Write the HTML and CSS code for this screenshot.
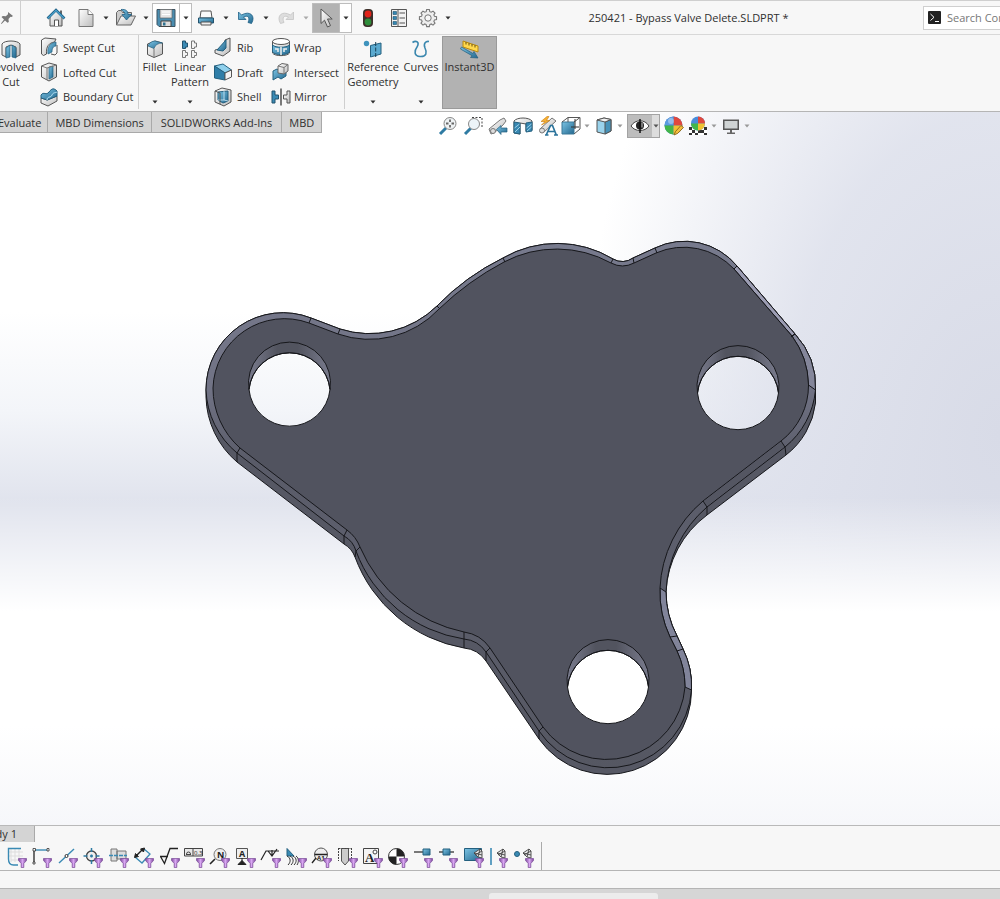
FILE: index.html
```
<!DOCTYPE html>
<html lang="en">

<head>
  <meta charset="UTF-8">
  <meta name="viewport" content="width=device-width, initial-scale=1.0">
  <title>250421 - Bypass Valve Delete.SLDPRT</title>
  <link rel="stylesheet" href="styles.css">
</head>

<body>
  <!-- shared gradients and symbols -->
  <svg class="defs" width="0" height="0" aria-hidden="true">
    <defs>
      <linearGradient id="blue" x1="0" y1="0" x2="1" y2="1">
        <stop offset="0" stop-color="#7cc4e4" />
        <stop offset="1" stop-color="#23688f" />
      </linearGradient>
      <linearGradient id="grey" x1="0" y1="0" x2="1" y2="1">
        <stop offset="0" stop-color="#ffffff" />
        <stop offset="1" stop-color="#bdbdbd" />
      </linearGradient>
      <linearGradient id="purple" x1="0" y1="0" x2="1" y2="0">
        <stop offset="0" stop-color="#7d4a9c" />
        <stop offset=".5" stop-color="#d9a6f2" />
        <stop offset="1" stop-color="#7d4a9c" />
      </linearGradient>
      <symbol id="funnel" viewBox="0 0 9 10">
        <path d="M.5.5h8v2L5.8 5.5v4H3.2v-4L.5 2.5z" fill="url(#purple)" stroke="#7a4a98" stroke-width=".7" />
      </symbol>
      <symbol id="caret" viewBox="0 0 6 4">
        <path d="M.5.5h5L3 3.5z" fill="currentColor" />
      </symbol>
      <symbol id="fan" viewBox="0 0 10 12">
        <path d="M1 5 7 1l2 2v7l-4-1zM1 5l8 2M7 1 5 9M9 3 2 7" fill="#e8e8e8" stroke="#444" stroke-width=".9" />
      </symbol>
    </defs>
  </svg>

  <header class="titlebar">
    <button class="pin" aria-label="Pin">
      <svg width="14" height="14" viewBox="0 0 14 14"><path d="M8 1l5 4-1.500 1-1-.3-2 2.300.3 3-1.300.8L5 9.500 1.500 13 1 12.500 4 8.500 1.500 6l1.300-1 3 .2L8 3.200z" fill="#777" /></svg>
    </button>
    <nav class="quick">
      <button class="wide" aria-label="Home">
        <svg width="20" height="20" viewBox="0 0 20 20"><path d="M4 9v9h12V9l-6-6z" fill="url(#grey)" stroke="#555" /><path d="M8.500 18v-6h4v6" fill="#fff" stroke="#555" /><path d="M14 2.500h2V6h-2z" fill="#666" /><path d="M1.500 10.500 10 2l8.500 8.500" fill="none" stroke="#1f5f85" stroke-width="2.600" /><path d="M2 10.200 10 2.400l8 7.800" fill="none" stroke="#4ba3cd" stroke-width="1.200" /></svg>
      </button>
      <div class="split">
        <button aria-label="New"><svg width="18" height="20" viewBox="0 0 18 20"><path d="M2 1.500h9l5 5v12H2z" fill="url(#grey)" stroke="#777" /><path d="M11 1.500v5h5" fill="#fff" stroke="#777" /></svg></button>
        <button class="drop" aria-label="New options"><svg><use href="#caret" /></svg></button>
      </div>
      <div class="split">
        <button aria-label="Open"><svg width="22" height="20" viewBox="0 0 22 20"><path d="M1.500 17V4.500l2-2h3l1 2h9V8" fill="#ccc" stroke="#666" /><path d="M1.500 17 6 8h14.500L16 17z" fill="url(#grey)" stroke="#666" /><path d="M6 1.500c5-.5 7 1.500 7 5h3.500L11.500 12 7 6.500h3c0-2-1.500-3.500-4-5z" fill="url(#blue)" stroke="#1f5f85" stroke-width=".8" /></svg></button>
        <button class="drop" aria-label="Open options"><svg><use href="#caret" /></svg></button>
      </div>
      <div class="split boxed">
        <button aria-label="Save"><svg width="20" height="20" viewBox="0 0 20 20"><path d="M1 1.500h18v17H3l-2-2z" fill="#4a8db0" stroke="#3d5361" /><path d="M4 1.500h12v8.500H4z" fill="#e5e5e5" stroke="#666" stroke-width=".7" /><path d="M5 13h10v5.500H5z" fill="#ddd" stroke="#444" /><path d="M7 14.500h2.500v3H7z" fill="#2e718f" /><path d="M6 4h8M6 6.500h8" stroke="#fff" /></svg></button>
        <button class="drop" aria-label="Save options"><svg><use href="#caret" /></svg></button>
      </div>
      <div class="split">
        <button aria-label="Print"><svg width="18" height="18" viewBox="0 0 18 18"><path d="M4 2h10l1 7H3z" fill="#fafafa" stroke="#555" /><path d="M1.500 9h15v5h-15z" fill="url(#blue)" stroke="#23526c" /><path d="M4 13h10v3H4z" fill="#eee" stroke="#555" /></svg></button>
        <button class="drop" aria-label="Print options"><svg><use href="#caret" /></svg></button>
      </div>
      <div class="split">
        <button aria-label="Undo"><svg width="18" height="18" viewBox="0 0 18 18"><path d="M1.500 3v7.500H9L6.500 8c4-2 7 0 4.500 5.500l3.500 1C19 7 13 1 4.500 6z" fill="url(#blue)" stroke="#1f5f85" stroke-width=".8" /></svg></button>
        <button class="drop" aria-label="Undo options"><svg><use href="#caret" /></svg></button>
      </div>
      <div class="split off">
        <button aria-label="Redo" disabled><svg width="18" height="18" viewBox="0 0 18 18"><path d="M16.500 3v7.500H9L11.500 8c-4-2-7 0-4.500 5.500l-3.500 1C-1 7 5 1 13.500 6z" fill="#ddd" stroke="#c4c4c4" stroke-width=".8" /></svg></button>
        <button class="drop" aria-label="Redo options"><svg><use href="#caret" /></svg></button>
      </div>
      <div class="split boxed pressed">
        <button aria-label="Select"><svg width="16" height="22" viewBox="0 0 16 22"><path d="M3 2v14.500l3.500-3.300 3 6.800 3-1.400-3-6.600h4.700z" fill="url(#grey)" stroke="#555" /></svg></button>
        <button class="drop" aria-label="Select options"><svg><use href="#caret" /></svg></button>
      </div>
      <button class="wide" aria-label="Rebuild">
        <svg width="12" height="20" viewBox="0 0 12 20"><rect x="1" y="1" width="10" height="18" rx="4" fill="#3d2f2a" /><circle cx="6" cy="6" r="3.400" fill="#e2231a" /><circle cx="6" cy="14" r="3.400" fill="#2f8d3b" /></svg>
      </button>
      <button class="list" aria-label="File properties">
        <svg width="18" height="20" viewBox="0 0 18 20"><path d="M1.500 1.500h15v17h-15zM8 1.500v17" fill="#f2f2f2" stroke="#555" /><path d="M3 3.500h3.500v3H3zM3 8.500h3.500v3H3zM3 13.500h3.500v3H3z" fill="#3487b3" stroke="#24526b" stroke-width=".6" /><path d="M9.500 5H15M9.500 10H15M9.500 15H15" stroke="#555" /></svg>
      </button>
      <div class="split">
        <button aria-label="Options"><svg width="20" height="20" viewBox="0 0 20 20"><path d="M8.500 1.500h3l.5 2.300 1.600.7 2-1.300 2.200 2.200-1.300 2 .7 1.600 2.300.5v3l-2.300.5-.7 1.600 1.300 2-2.200 2.200-2-1.300-1.600.7-.5 2.300h-3L8 18.200l-1.600-.7-2 1.300-2.200-2.200 1.300-2-.7-1.600L.5 12.500v-3L2.800 9l.7-1.600-1.300-2 2.200-2.200 2 1.300L8 3.800z" transform="translate(1 .2) scale(.9)" fill="#eee" stroke="#777" stroke-width="1.200" /><circle cx="10" cy="10" r="3.200" fill="#f7f7f7" stroke="#777" /></svg></button>
        <button class="drop" aria-label="More options"><svg><use href="#caret" /></svg></button>
      </div>
    </nav>
    <div class="doc-title">250421 - Bypass Valve Delete.SLDPRT *</div>
    <label class="search">
      <svg width="13" height="13" viewBox="0 0 13 13" aria-hidden="true"><rect width="13" height="13" rx="1" fill="#222" /><path d="M2.500 3 6 6.300 2.500 9.500M7 10.500h4" fill="none" stroke="#fff" /></svg>
      <input type="text" placeholder="Search Commands" aria-label="Search Commands">
    </label>
  </header>

  <section class="ribbon">
    <div class="group first">
      <button class="big">
        <svg width="20" height="20" viewBox="0 0 20 20"><path d="M1 5c2-4 16-4 18 0v11l-4 2V8L10 6 5 8v10l-4-2z" fill="url(#grey)" stroke="#555" /><path d="M5 9l4-3v12l-4 1zM11 6l4 3v10l-4-1z" fill="url(#blue)" stroke="#24607f" stroke-width=".7" /></svg>
        <span>Revolved<br>Cut</span>
      </button>
      <div class="stack">
        <button><svg width="18" height="20" viewBox="0 0 18 20"><path d="M1.500 3 5 1l11 1-1.500 3C9 6 6 9 6.500 17l-3 1.500-2-1.500z" fill="url(#grey)" stroke="#555" /><path d="M8 17C7 10 10 6 16 5v4c-3 0-4 3-4 6z" fill="url(#blue)" stroke="#24607f" stroke-width=".7" /><path d="M11 17l4 1 2-2V8" fill="none" stroke="#555" /></svg>Swept Cut</button>
        <button><svg width="18" height="20" viewBox="0 0 18 20"><path d="M1.500 4 9 1l7.500 2v12L9 19l-7.500-4z" fill="url(#grey)" stroke="#555" /><path d="M1.500 4 7 6v12" fill="none" stroke="#777" /><path d="M9 5l4-1v11l-4 2z" fill="url(#blue)" stroke="#24607f" stroke-width=".7" /><path d="M7 6l9.500-3" stroke="#777" /></svg>Lofted Cut</button>
        <button><svg width="18" height="20" viewBox="0 0 18 20"><path d="M1 11l6 2 10-4v5l-9 5-7-3z" fill="url(#grey)" stroke="#555" /><path d="M1 11V8c3-4 5 1 8-3s5-4 8-1v5L7.500 13z" fill="url(#blue)" stroke="#24607f" /><path d="M7 13c0-4 4-2 5-5s4-2 5-3" fill="none" stroke="#b8e3f5" /></svg>Boundary Cut</button>
      </div>
    </div>

    <div class="group">
      <button class="big fillet">
        <svg width="18" height="20" viewBox="0 0 18 20"><path d="M1.500 5 9 2l7.500 2v11L8 18.500l-6.500-3z" fill="url(#grey)" stroke="#555" /><path d="M2 7c1-3 4-5 7-5l7.500 2C12 4 9 6 8 9.500z" fill="url(#blue)" stroke="#24607f" stroke-width=".7" /><path d="M8 9.500v9" stroke="#777" /></svg>
        <span>Fillet</span>
        <svg class="caret"><use href="#caret" /></svg>
      </button>
      <button class="big pattern">
        <svg width="18" height="20" viewBox="0 0 18 20"><path d="M1.500 2h3v2h2v4h-2v1.500h-3z" fill="#3a8ab4" stroke="#23536d" /><path d="M10.500 2h3v2h2v4h-2v1.500h-3zM1.500 11.500h3v2h2v3h-2v2h-3zM10.500 11.500h3v2h2v3h-2v2h-3z" fill="#f4f4f4" stroke="#777" /></svg>
        <span>Linear<br>Pattern</span>
        <svg class="caret"><use href="#caret" /></svg>
      </button>
      <div class="stack">
        <button><svg width="18" height="20" viewBox="0 0 18 20"><path d="M1 13l9-2 1-8 5-2v13l-7 5-8-3z" fill="url(#grey)" stroke="#555" /><path d="M3 13l9-10v8l-3 3z" fill="url(#blue)" stroke="#24607f" /></svg>Rib</button>
        <button><svg width="18" height="20" viewBox="0 0 18 20"><path d="M.5 4 9 2l8.500 6L11 11z" fill="#8fd0ec" stroke="#24607f" /><path d="M.5 4 11 11v7L.5 16z" fill="#2f7ea8" stroke="#24607f" /><path d="M11 11l6.500-3v7L11 18z" fill="#f4f4f4" stroke="#555" /></svg>Draft</button>
        <button><svg width="18" height="20" viewBox="0 0 18 20"><path d="M1 4 8 1l9 2v12l-7 4-9-4z" fill="url(#grey)" stroke="#555" /><path d="M4 5l10-1v10l-5 2-5-3z" fill="url(#blue)" stroke="#24607f" /><path d="M10 4v9l4 1M4 13l6 0" fill="none" stroke="#d4effa" stroke-width=".8" /><path d="M1 4l5 2v11" fill="none" stroke="#555" /></svg>Shell</button>
      </div>
      <div class="stack wrap">
        <button><svg width="20" height="20" viewBox="0 0 20 20"><path d="M1.500 4v12c2 3.500 15 3.500 17 0V4" fill="url(#grey)" stroke="#555" /><path d="M1.500 8c3 3 14 3 17 0v7c-3 3.500-14 3.500-17 0z" fill="url(#blue)" stroke="#24607f" /><ellipse cx="10" cy="4.500" rx="8.500" ry="3" fill="#fff" stroke="#555" /><path d="M4 12h3v3M16 12h-3v3M10 10v8" fill="none" stroke="#eee" stroke-width="1.500" /></svg>Wrap</button>
        <button><svg width="20" height="20" viewBox="0 0 20 20"><path d="M2 9l4-2 3 2 6-1v6l-5 3-3-2-5 3z" fill="url(#blue)" stroke="#24607f" /><path d="M7 4l4-2.500 6 1V9l-4 3-6-1z" fill="url(#grey)" stroke="#666" /><path d="M7 4l6 1.500V12M13 5.500l4-3" fill="none" stroke="#777" /></svg>Intersect</button>
        <button><svg width="20" height="20" viewBox="0 0 20 20"><path d="M1 4h3v4h3.500v4H4v4H1z" fill="#3a8ab4" stroke="#23536d" /><path d="M19 4h-3v4h-3.500v4H16v4h3z" fill="url(#grey)" stroke="#555" /><path d="M10 1.500v17" stroke="#444" stroke-width="1.400" /></svg>Mirror</button>
      </div>
    </div>

    <div class="group last">
      <button class="big reference">
        <svg width="20" height="20" viewBox="0 0 20 20"><circle cx="3.500" cy="4.500" r="2.700" fill="#3f93bd" /><path d="M7.500 6.500 18 4v11L7.500 18z" fill="#5aa9cf" stroke="#24607f" /><path d="M12.700 3v16" stroke="#173f55" stroke-dasharray="4 1.500" /></svg>
        <span>Reference<br>Geometry</span>
        <svg class="caret"><use href="#caret" /></svg>
      </button>
      <button class="big curves">
        <svg width="20" height="20" viewBox="0 0 20 20"><path d="M1.500 3.500C5 1 9 3 6 8c-3 4-3 9 3 9.500 7 .5 7-4.500 5-8.500-2-5 1-7 4-6.500" fill="none" stroke="#3a87ae" stroke-width="1.600" /></svg>
        <span>Curves</span>
        <svg class="caret"><use href="#caret" /></svg>
      </button>
      <button class="big instant" aria-pressed="true">
        <svg width="20" height="20" viewBox="0 0 20 20"><path d="M3 2l15 5v6L3 8z" fill="#ffd84d" stroke="#b98a12" /><path d="M6 3v2.500M9 4v2.500M12 5v2.500M15 6v2.500" stroke="#6d5312" /><path d="M1.500 8 13 14.500l1-2L18 19l-7.500-.5 1.500-1.800L.5 10z" fill="url(#blue)" stroke="#24607f" stroke-width=".7" /></svg>
        <span>Instant3D</span>
      </button>
    </div>
  </section>

  <main class="viewport">
    <svg class="model" viewBox="0 112 1000 713" role="img" aria-label="Bypass valve plate">
      <defs>
        <linearGradient id="bevel" gradientUnits="userSpaceOnUse" x1="0" y1="240" x2="0" y2="770">
          <stop offset="0" stop-color="#777a8d" />
          <stop offset=".28" stop-color="#717385" />
          <stop offset=".42" stop-color="#595b68" />
          <stop offset=".6" stop-color="#5d5f6d" />
          <stop offset="1" stop-color="#555762" />
        </linearGradient>
        <linearGradient id="wall" x1="0" y1="0" x2="1" y2="0">
          <stop offset="0" stop-color="#7a7c8e" />
          <stop offset=".35" stop-color="#52545f" />
          <stop offset=".6" stop-color="#52545f" />
          <stop offset="1" stop-color="#7a7c8e" />
        </linearGradient>
        <path id="hole-left" d="M249 389.500a40.700 40.700 0 0 1 81 0a40.700 40.700 0 0 1-81 0z" />
        <path id="hole-right" d="M697.500 393a40.700 40.700 0 0 1 81 0a40.700 40.700 0 0 1-81 0z" />
        <path id="hole-bottom" d="M567.500 687a40.700 40.700 0 0 1 81 0a40.700 40.700 0 0 1-81 0z" />
        <mask id="holes">
          <rect y="112" width="1000" height="713" fill="#fff" />
          <use href="#hole-left" />
          <use href="#hole-right" />
          <use href="#hole-bottom" />
        </mask>
      </defs>
      <g mask="url(#holes)" stroke="#16171b" stroke-linejoin="round">
        <!-- side of the plate -->
        <path fill="#565864" d="M206 390A77 77 0 0 1 311 318L340 329A96 96 0 0 0 437 306A240 240 0 0 1 503 258A108 108 0 0 1 613 259A18 18 0 0 0 633 258L655 248A68 68 0 0 1 737 266L795 334A78 78 0 0 1 815.500 390V403A77 77 0 0 1 786 455L707 515A102 102 0 0 0 666 592A95 95 0 0 0 677 636L683 649A84 84 0 0 1 691.500 690A84 84 0 0 1 539 739L486 661A30 30 0 0 0 464 648A142 142 0 0 1 355 557A25 25 0 0 0 344 544L237 462A88 88 0 0 1 206 397z" />
        <!-- bevel -->
        <path fill="url(#bevel)" d="M206 390A77 77 0 0 1 311 318L340 329A96 96 0 0 0 437 306A240 240 0 0 1 503 258A108 108 0 0 1 613 259A18 18 0 0 0 633 258L655 248A68 68 0 0 1 737 266L795 334A78 78 0 0 1 815.500 390A83 83 0 0 1 785 447L707 507A118 118 0 0 0 666 592A95 95 0 0 0 677 636L683 649A84 84 0 0 1 691.500 690A83.500 83.500 0 0 1 539 731L486 652A30 30 0 0 0 464 639A137 137 0 0 1 356 551A25 25 0 0 0 344 536L237 453A86 86 0 0 1 206 390z" />
        <path fill="#9c9db3" d="M737 266L795 334 792 336 734 269z" />
        <path fill="#84869a" d="M795 334A78 78 0 0 1 815.500 390L808.500 385A86 86 0 0 0 792 336z" />
        <path fill="#81849a" d="M666 592A95 95 0 0 0 677 636L683 649A84 84 0 0 1 691.500 690L685 687A84 84 0 0 0 677 651L670 637A105 105 0 0 1 660 588z" />
        <!-- top face -->
        <path fill="#51535f" d="M213 388A71.500 71.500 0 0 1 309 323L338 334A95 95 0 0 0 439 309A287 287 0 0 1 504 262A113 113 0 0 1 611 263A25 25 0 0 0 634 263L656 253A69 69 0 0 1 734 269L792 336A86 86 0 0 1 808.500 385A70 70 0 0 1 781 441L703 501A121 121 0 0 0 660 588A105 105 0 0 0 670 637L677 651A84 84 0 0 1 685 687A78.600 78.600 0 0 1 543 727L490 648A38 38 0 0 0 464 632A145 145 0 0 1 360 547A38 38 0 0 0 347 530L240 448A80 80 0 0 1 213 388z" />
        <path stroke="none" fill="#545662" d="M784.500 446.500L707 506 703.500 501.500 781 442z" />
        <!-- facet seams -->
        <path fill="none" d="M311 318l-2 5M340 329l-2 5M437 306l3 3M503 258l2 4M613 259l-2 4M633 258l1 5M655 248l2 5M737 266l-3 3M795 334l-4 3M781 441l4 6 1 8M703 501l4 6v8M670 637l7-1M677 651l6-2M543 727l-4 4v8M490 648l-4 4v9M464 632v16M360 547l-4 4-1 6M347 530l-3 6v8M240 448l-3 5v9" />
      </g>
      <g fill="url(#wall)" stroke="#16171b">
        <path d="M249 389.500a41 41 0 1 1 81 0a40.700 40.700 0 0 0-81 0z" />
        <path d="M697.500 393a41 41 0 1 1 81 0a40.700 40.700 0 0 0-81 0z" />
        <path d="M567.500 687a41 41 0 1 1 81 0a40.700 40.700 0 0 0-81 0z" />
        <g fill="none">
          <use href="#hole-left" />
          <use href="#hole-right" />
          <use href="#hole-bottom" />
        </g>
      </g>
    </svg>

    <div class="overlay">
      <nav class="tabs">
        <button>Evaluate</button>
        <button>MBD Dimensions</button>
        <button class="addins">SOLIDWORKS Add-Ins</button>
        <button>MBD</button>
      </nav>
      <div class="headsup">
        <div class="view-tools">
          <button aria-label="Zoom to fit"><svg width="20" height="20" viewBox="0 0 20 20"><path d="M2 18l6-6" stroke="#2f7ba3" stroke-width="3" /><circle cx="12" cy="7.500" r="6" fill="#eef2f4" stroke="#888" /><path d="M12 3.500v8M8 7.500h8" stroke="#666" stroke-width="1.800" stroke-dasharray="2.500 3" /></svg></button>
          <button aria-label="Zoom to area"><svg width="20" height="20" viewBox="0 0 20 20"><path d="M9 1.500h10v11" fill="none" stroke="#444" stroke-dasharray="2 1.500" /><path d="M2 18l6-6" stroke="#2f7ba3" stroke-width="3" /><circle cx="11" cy="8" r="5.500" fill="#edf4f8" stroke="#888" /></svg></button>
          <button aria-label="Previous view"><svg width="20" height="20" viewBox="0 0 20 20"><path d="M1 13 12 4l4-2 2 3-3 4-9 8-3 1z" fill="url(#grey)" stroke="#777" /><circle cx="5" cy="15" r="2.500" fill="#ddd" stroke="#777" /><path d="M8.500 13.500 13 9.500V12h6v4h-6v2.500z" fill="url(#blue)" stroke="#24607f" stroke-width=".7" /></svg></button>
          <button aria-label="Section view"><svg width="20" height="20" viewBox="0 0 20 20"><path d="M1 5c3-4 15-4 18 0v9l-6 1V8l-6-1v11l-6-1z" fill="url(#grey)" stroke="#555" /><path d="M1 6l6 1v11l-6-1zM13 7l6-1v9l-6 1z" fill="#3888b2" stroke="#24607f" /><path d="M1.500 12l5-4M2 16l5-5M13.500 12l5-4M14 15l4.500-4" stroke="#b5e2f5" stroke-width=".8" /></svg></button>
          <button aria-label="Dynamic annotation views"><svg width="20" height="20" viewBox="0 0 20 20"><path d="M2 13 14 2l4 3L6 16z" fill="url(#grey)" stroke="#777" /><circle cx="4" cy="14.500" r="2.500" fill="#ddd" stroke="#777" /><path d="M9 .5 3 5.500h4L3.500 9 12 4.500H8.500L11 .5z" fill="#f9b233" stroke="#c47a10" stroke-width=".6" /><path d="M8 19.500l4.500-10h2l4 10M10.500 15.500h6M7 19h3.500M16 19h4" fill="none" stroke="#2b739b" stroke-width="1.700" /></svg></button>
        </div>
        <div class="split">
          <button aria-label="View orientation"><svg width="20" height="20" viewBox="0 0 20 20"><path d="M1 6h12v12H1z" fill="url(#blue)" stroke="#3a7898" /><path d="M1 6l6-4.500h12V13l-6 5M7 1.500V6M19 1.500 13 6" fill="none" stroke="#555" /><path d="M14 3v10M10 11h8" stroke="#333" /></svg></button>
          <button class="drop" aria-label="View orientation options"><svg><use href="#caret" /></svg></button>
        </div>
        <div class="split">
          <button aria-label="Display style"><svg width="18" height="20" viewBox="0 0 18 20"><path d="M2 4l7-2 7 1.500V15l-6 3-8-2z" fill="#9ad3ec" stroke="#555" /><path d="M10 6v12l6-3V3.500z" fill="#4792b8" stroke="#555" /><path d="M2 4l7-2 7 1.500L10 6z" fill="#f2f2f2" stroke="#555" /></svg></button>
          <button class="drop" aria-label="Display style options"><svg><use href="#caret" /></svg></button>
        </div>
        <div class="split hide">
          <button aria-label="Hide or show items"><svg width="20" height="16" viewBox="0 0 20 16"><path d="M1 8c4-7 14-7 18 0-4 6-14 6-18 0z" fill="#fff" stroke="#444" /><circle cx="10" cy="7.500" r="4" fill="#222" /><path d="M10 1v14" stroke="#111" stroke-width="1.500" /><path d="M12 4.500v5" stroke="#ccc" /></svg></button>
          <button class="drop" aria-label="Hide or show options"><svg><use href="#caret" /></svg></button>
        </div>
        <button class="appearance" aria-label="Edit appearance"><svg width="20" height="20" viewBox="0 0 20 20"><circle cx="9.500" cy="9.500" r="9" fill="#3c7fd0" /><path d="M9.500 9.500V.5a9 9 0 0 1 9 9z" fill="#e0483e" /><path d="M9.500 9.500V.5a9 9 0 0 0-9 9z" fill="#5b9be0" /><path d="M9.500 9.500h-9a9 9 0 0 0 9 9z" fill="#42b649" /><path d="M9.500 9.500h9a9 9 0 0 1-9 9z" fill="#f1c232" /><circle cx="7" cy="5" r="3" fill="#fff" opacity=".35" /><path d="M10 19l1.500-3.500 5.500-6 2.500 2-6 6z" fill="#f4bd3f" stroke="#7d5c15" stroke-width=".8" /></svg></button>
        <div class="split">
          <button aria-label="Apply scene"><svg width="20" height="20" viewBox="0 0 20 20"><path d="M1 11h18v8H1z" fill="#fff" /><path d="M1 11h3v3H1zM7 11h3v3H7zM16 11h3v3h-3zM4 14h3v3H4zM10 14h3v3h-3zM13 14h3v3h-3zM1 17h3v2H1zM7 17h3v2H7zM16 17h3v2h-3z" fill="#333" /><circle cx="10" cy="7.500" r="7" fill="#4a8cdb" /><path d="M10 7.500V.5a7 7 0 0 1 7 7z" fill="#e0483e" /><path d="M10 7.500H3a7 7 0 0 0 7 7z" fill="#42b649" /><path d="M10 7.500h7a7 7 0 0 1-7 7z" fill="#f1c232" /></svg></button>
          <button class="drop" aria-label="Scene options"><svg><use href="#caret" /></svg></button>
        </div>
        <div class="split">
          <button aria-label="View settings"><svg width="18" height="18" viewBox="0 0 18 18"><path d="M1 2.500h16v10.500H1z" fill="#555" /><path d="M2.500 4h13v7.500h-13z" fill="#cfd3d4" /><path d="M8 13h2v2.500h3V17H5v-1.500h3z" fill="#666" /></svg></button>
          <button class="drop" aria-label="View settings options"><svg><use href="#caret" /></svg></button>
        </div>
      </div>
    </div>
  </main>

  <footer>
    <div class="study"><button>Study 1</button></div>
    <div class="filters">
      <button aria-label="Filter sketches"><svg viewBox="0 0 24 22"><path d="M7 1v14M11 1v14M15 1v10M5 5h14M5 9h14M7 13h7" stroke="#ddd" /><path d="M17 1.500H4.500V12c0 4 2 6 5 6H14" fill="none" stroke="#3a8ab4" stroke-width="1.400" /><use href="#funnel" x="14" y="11" width="9" height="10" /></svg></button>
      <button aria-label="Filter sketch segments"><svg viewBox="0 0 24 22"><path d="M5 16V3" stroke="#333" stroke-width="1.400" /><path d="M5 3h14" stroke="#3a8ab4" stroke-width="1.400" /><path d="M4 1.500h2.500V4H4zM18 1.500h2V4h-2zM4 15h2v2H4z" fill="#fff" stroke="#333" stroke-width=".8" /><use href="#funnel" x="14" y="11" width="9" height="10" /></svg></button>
      <button aria-label="Filter midpoints"><svg viewBox="0 0 24 22"><path d="M4 16 19 2" stroke="#3a8ab4" stroke-width="1.400" /><circle cx="11.500" cy="9" r="1.500" fill="#fff" stroke="#333" /><use href="#funnel" x="14" y="11" width="9" height="10" /></svg></button>
      <button aria-label="Filter center marks"><svg viewBox="0 0 24 22"><circle cx="11.500" cy="9" r="5" fill="#eee" stroke="#444" stroke-width="1.300" /><path d="M11.500 1v4M11.500 13v4M3.500 9h4M15.500 9h4M10 9h3M11.500 7.500v3" stroke="#2f7ba3" stroke-width="1.500" /><use href="#funnel" x="14" y="11" width="9" height="10" /></svg></button>
      <button aria-label="Filter centerlines"><svg viewBox="0 0 24 22"><path d="M5 2h6v12H5zM11 4h9v8h-9z" fill="#ddd" stroke="#777" /><path d="M3 8.500h18" stroke="#3a8ab4" stroke-width="1.400" stroke-dasharray="4 1" /><use href="#funnel" x="14" y="11" width="9" height="10" /></svg></button>
      <button aria-label="Filter dimensions"><svg viewBox="0 0 24 22"><path d="M4 10l7 6 8-9-6-5" fill="none" stroke="#3a8ab4" stroke-width="1.300" /><path d="M5 9l7-7" stroke="#222" stroke-width="1.500" /><path d="M3.500 10.500l1-4 3 3zM13.500 1l-4 1 3 3z" fill="#222" stroke="#222" /><use href="#funnel" x="14" y="11" width="9" height="10" /></svg></button>
      <button aria-label="Filter surface finish"><svg viewBox="0 0 24 22"><path d="M3 9.500h8M3.500 9.500l4 7L13 1.500h8" fill="none" stroke="#222" stroke-width="1.300" /><use href="#funnel" x="14" y="11" width="9" height="10" /></svg></button>
      <button aria-label="Filter geometric tolerances"><svg viewBox="0 0 24 22"><path d="M2.500 1.500h18v7.500h-18zM11 1.500V9" fill="#e8e8e8" stroke="#444" /><path d="M4 7.500h5M4.500 7a2 2 0 0 1 4 0" fill="none" stroke="#444" /><text x="12" y="8" font-size="6" fill="#222">0.3</text><use href="#funnel" x="14" y="11" width="9" height="10" /></svg></button>
      <button aria-label="Filter notes"><svg viewBox="0 0 24 22"><path d="M3 17l5-5" stroke="#222" stroke-width="1.600" /><circle cx="13" cy="7.500" r="6" fill="#eee" stroke="#777" /><text x="10" y="11" font-size="9" font-weight="bold" fill="#222">N</text><use href="#funnel" x="14" y="11" width="9" height="10" /></svg></button>
      <button aria-label="Filter datum features"><svg viewBox="0 0 24 22"><path d="M3.500 1.500h11v10h-11z" fill="#eee" stroke="#555" /><path d="M9 11v5M5 17.500l4-4 4 4z" fill="#222" stroke="#222" /><text x="6" y="10" font-size="9" font-weight="bold" fill="#222">A</text><use href="#funnel" x="14" y="11" width="9" height="10" /></svg></button>
      <button aria-label="Filter weld symbols"><svg viewBox="0 0 24 22"><path d="M3 13l5-9h13M10 4l4 5 5-7M14 3v6" fill="none" stroke="#222" stroke-width="1.200" /><use href="#funnel" x="14" y="11" width="9" height="10" /></svg></button>
      <button aria-label="Filter weld beads"><svg viewBox="0 0 24 22"><path d="M3 1.500 10 9H3z" fill="#3a8ab4" stroke="#24607f" /><path d="M3 9c4 2 4 6 1 9M6 9c4 2 4 6 1 9M9 9c4 2 4 6 1 9M12 9c3 2 3 6 1 9" fill="none" stroke="#333" /><use href="#funnel" x="14" y="11" width="9" height="10" /></svg></button>
      <button aria-label="Filter datum targets"><svg viewBox="0 0 24 22"><circle cx="12" cy="7.500" r="6.500" fill="#eee" stroke="#555" /><path d="M5.500 7.500h13M3 16l4-5" stroke="#222" stroke-width="1.300" /><text x="8" y="13" font-size="6" font-weight="bold" fill="#222">A1</text><use href="#funnel" x="14" y="11" width="9" height="10" /></svg></button>
      <button aria-label="Filter cosmetic threads"><svg viewBox="0 0 24 22"><path d="M6.500 1.500h7V14l-3.500 4-3.500-4z" fill="#ccc" stroke="#555" /><path d="M3.500 1v13M16.500 1v11M3.500 1.500h13" fill="none" stroke="#444" stroke-dasharray="2 1" /><use href="#funnel" x="14" y="11" width="9" height="10" /></svg></button>
      <button aria-label="Filter blocks"><svg viewBox="0 0 24 22"><path d="M3.500 1.500h15v15h-15z" fill="#f4f4f4" stroke="#444" /><circle cx="15" cy="5" r="2" fill="#fff" stroke="#444" /><text class="serif" x="5" y="14.500" font-size="13" font-weight="bold" fill="#222">A</text><use href="#funnel" x="14" y="11" width="9" height="10" /></svg></button>
      <button aria-label="Filter center of mass"><svg viewBox="0 0 24 22"><circle cx="11.500" cy="9.500" r="8" fill="#fff" stroke="#333" /><path d="M11.500 9.500v-8a8 8 0 0 1 8 8zM11.500 9.500v8a8 8 0 0 1-8-8z" fill="#222" /><use href="#funnel" x="14" y="11" width="9" height="10" /></svg></button>
      <button aria-label="Filter connection points"><svg viewBox="0 0 24 22"><path d="M3 5h9" stroke="#333" stroke-width="1.300" /><path d="M12 2h7v6h-7z" fill="url(#blue)" stroke="#24607f" /><use href="#funnel" x="13" y="11" width="9" height="10" /></svg></button>
      <button aria-label="Filter routing points"><svg viewBox="0 0 24 22"><path d="M3 5h15" stroke="#333" stroke-width="1.300" /><path d="M7 2h7v6H7z" fill="url(#blue)" stroke="#24607f" /><use href="#funnel" x="13" y="11" width="9" height="10" /></svg></button>
      <button aria-label="Filter mesh faces"><svg viewBox="0 0 24 22"><path d="M2.500 1.500h17v12h-17z" fill="url(#blue)" stroke="#24607f" /><use href="#fan" x="11" y="1" width="10" height="12" /><use href="#funnel" x="13" y="11" width="9" height="10" /></svg></button>
      <button aria-label="Filter mesh edges"><svg viewBox="0 0 24 22"><path d="M4 1v17" stroke="#3a8ab4" stroke-width="1.600" /><use href="#fan" x="9" y="1" width="10" height="12" /><use href="#funnel" x="12" y="11" width="9" height="10" /></svg></button>
      <button aria-label="Filter mesh vertices"><svg viewBox="0 0 24 22"><circle cx="4" cy="7" r="2.500" fill="#3a8ab4" stroke="#24607f" /><use href="#fan" x="9" y="1" width="10" height="12" /><use href="#funnel" x="12" y="11" width="9" height="10" /></svg></button>
    </div>
    <div class="status"></div>
    <div class="desktop"><div class="window-edge"></div></div>
  </footer>
</body>

</html>
```
FILE: styles.css
```
:root {
  --bar: #f7f7f7;
  --line: #cfcfcf;
  --tab: #d4d4d4;
  --text: #303030;
}

* {
  box-sizing: border-box;
}

body {
  margin: 0;
  height: 100vh;
  display: flex;
  flex-direction: column;
  overflow: hidden;
  font-family: "Open Sans", "Noto Sans", sans-serif;
  font-size: 11px;
  line-height: 15px;
  color: var(--text);
  background: var(--bar);
}

button {
  margin: 0;
  padding: 0;
  border: 0;
  background: none;
  color: inherit;
  font: inherit;
  white-space: nowrap;
}

svg {
  flex: none;
  display: block;
}

.defs {
  position: absolute;
}

/* title bar */
.titlebar {
  display: flex;
  align-items: center;
  height: 35px;
  flex: none;
  border-top: 1px solid var(--line);
  border-bottom: 1px solid #d8d8d8;
}

.pin {
  width: 21px;
  height: 100%;
  margin-right: 19px;
  border-right: 1px solid var(--line);
}

.quick,
.split {
  display: flex;
  align-items: center;
}

.split button,
.wide,
.list {
  display: flex;
  align-items: center;
  justify-content: center;
  width: 27px;
  height: 30px;
}

.wide {
  width: 32px;
}

.list {
  width: 30px;
}

.split .drop {
  width: 13px;
}

.drop svg,
.caret {
  width: 6px;
  height: 4px;
}

.boxed {
  background: #fff;
  outline: 1px solid #bdbdbd;
  outline-offset: -1px;
}

.boxed .drop {
  border-left: 1px solid #bdbdbd;
}

.pressed button:first-child {
  background: #b2b2b2;
}

.off .drop {
  color: #aaa;
}

.doc-title {
  flex: 1;
  text-align: center;
  white-space: nowrap;
}

.search {
  display: flex;
  align-items: center;
  gap: 6px;
  width: 120px;
  height: 24px;
  margin-right: -43px;
  padding-left: 4px;
  background: #fff;
  border: 1px solid var(--line);
}

.search input {
  width: 90px;
  padding: 0;
  border: 0;
  outline: 0;
  font: inherit;
}

.search input::placeholder {
  color: #777;
}

/* ribbon */
.ribbon {
  display: flex;
  flex: none;
  height: 77px;
  border-bottom: 1px solid #b5b5b5;
}

.group {
  display: flex;
  margin-bottom: 2px;
  border-right: 1px solid var(--line);
}

.group.first {
  margin-left: -14px;
  width: 153px;
}

.group:nth-child(2) {
  width: 206px;
}

.group.last {
  border: 0;
}

.big {
  display: flex;
  flex-direction: column;
  align-items: center;
  width: 50px;
  padding: 4px 0 5px;
}

.big .caret {
  margin-top: auto;
}

.fillet {
  width: 31px;
}

.pattern {
  width: 40px;
}

.reference {
  width: 56px;
}

.curves {
  width: 40px;
}

.instant {
  width: 55px;
  margin: 1px 0 0 1px;
  padding-top: 2px;
  background: #b2b2b2;
  border: 1px solid #9a9a9a;
}

.stack {
  display: flex;
  flex-direction: column;
  padding-left: 4px;
  width: 57px;
}

.stack button {
  display: flex;
  align-items: center;
  gap: 5px;
  height: 25px;
}

.wrap button {
  gap: 3px;
}

/* graphics area */
.viewport {
  flex: 1;
  min-height: 0;
  display: grid;
  grid-template: minmax(0, 1fr) / minmax(0, 1fr);
  background:
    linear-gradient(to bottom, rgba(255, 255, 255, 0) 54%, #fff 70%, #fff 86%, #f6f7fa 100%),
    radial-gradient(ellipse 42% 90% at 100% 45%, #d8dbe7 0%, rgba(222, 225, 236, 0.9) 50%, rgba(240, 242, 248, 0) 100%),
    linear-gradient(to bottom, #fff 28%, #f3f5f9 42%, #e0e3ed 55%);
}

.model,
.overlay {
  grid-area: 1 / 1;
}

.model {
  width: 100%;
  height: 100%;
}

.overlay {
  display: flex;
  align-items: flex-start;
}

.tabs {
  display: flex;
}

.tabs button {
  height: 21px;
  padding: 0 7px;
  background: var(--tab);
  border: solid #a9a9a9;
  border-width: 0 1px 1px 0;
}

.tabs button:first-child {
  margin-left: -2px;
  padding: 0 6px 0 0;
}

.tabs .addins {
  padding: 0 9px;
}

.headsup {
  display: flex;
  align-items: center;
  gap: 1px;
  margin: 2px 0 0 116px;
}

.view-tools {
  display: flex;
  gap: 5px;
  margin-right: 2px;
}

.headsup .split {
  color: #999;
}

.headsup .split button {
  width: 20px;
  height: 24px;
}

.headsup .split .drop {
  width: 12px;
}

.headsup .hide {
  background: #bdbdbd;
  outline: 1px solid #a3a3a3;
  outline-offset: -1px;
}

.headsup .hide button {
  width: 25px;
}

.headsup .hide .drop {
  width: 8px;
  color: #555;
  background: #ddd;
}

.appearance {
  padding: 0 3px;
}

/* bottom bars */
footer {
  flex: none;
  border-top: 1px solid #b9b9b9;
}

.study button {
  display: flex;
  justify-content: flex-end;
  width: 35px;
  height: 16px;
  padding-right: 17px;
  background: var(--tab);
  border-right: 1px solid #a9a9a9;
}

.filters {
  display: grid;
  grid-template-columns: repeat(21, 1fr);
  width: 542px;
  height: 28px;
  padding: 4px 3px 0 4px;
  border-right: 1px solid #aaa;
}

.filters svg {
  width: 24px;
  height: 22px;
}

.filters .serif {
  font-family: "Liberation Serif", serif;
}

.status {
  height: 19px;
  border: solid #b5b5b5;
  border-width: 1px 0;
}

.desktop {
  height: 10px;
  padding-top: 4px;
  background: #d6d6d6;
}

.window-edge {
  width: 169px;
  height: 6px;
  margin-left: 489px;
  background: #ececec;
  border-radius: 3px 3px 0 0;
}
```
